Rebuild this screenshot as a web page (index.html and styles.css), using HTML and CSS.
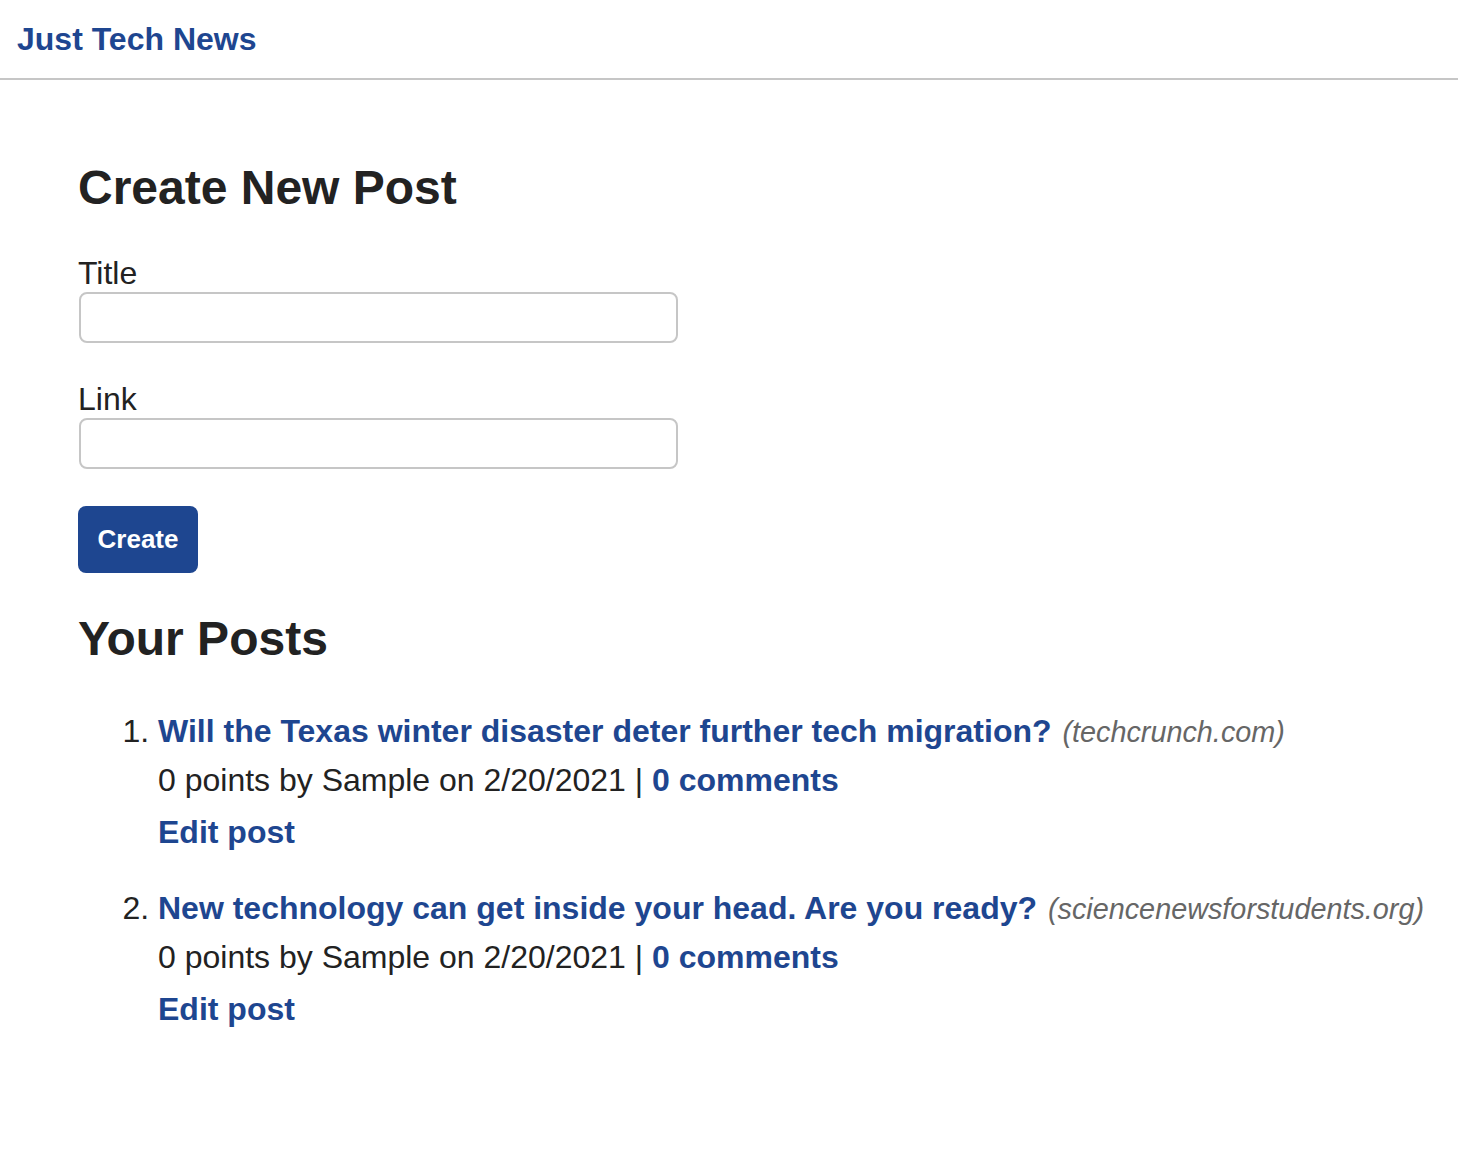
FILE: index.html
```html
<!DOCTYPE html>
<html lang="en">
<head>
<meta charset="utf-8">
<title>Just Tech News</title>
<link rel="stylesheet" href="styles.css">
</head>
<body>
<header class="site-header">
  <a class="brand" href="#">Just Tech News</a>
</header>
<main class="main">
  <h2 class="section-title">Create New Post</h2>
  <form class="post-form">
    <label class="field-label" for="title">Title</label>
    <input class="field-input" id="title" type="text">
    <label class="field-label field-label-gap" for="link">Link</label>
    <input class="field-input" id="link" type="text">
    <button class="btn" type="button">Create</button>
  </form>
  <h2 class="section-title posts-title">Your Posts</h2>
  <ol class="post-list">
    <li class="post">
      <div class="post-line"><a class="post-link" href="#">Will the Texas winter disaster deter further tech migration?</a> <span class="domain">(techcrunch.com)</span></div>
      <div class="post-line">0 points by Sample on 2/20/2021 | <a class="post-link" href="#">0 comments</a></div>
      <div class="post-line post-edit"><a class="post-link" href="#">Edit post</a></div>
    </li>
    <li class="post">
      <div class="post-line"><a class="post-link" href="#">New technology can get inside your head. Are you ready?</a> <span class="domain">(sciencenewsforstudents.org)</span></div>
      <div class="post-line">0 points by Sample on 2/20/2021 | <a class="post-link" href="#">0 comments</a></div>
      <div class="post-line post-edit"><a class="post-link" href="#">Edit post</a></div>
    </li>
  </ol>
</main>
</body>
</html>
```
FILE: styles.css
```css
html, body {
  margin: 0;
  padding: 0;
  background: #ffffff;
}
body {
  font-family: "Liberation Sans", Arial, Helvetica, sans-serif;
  font-size: 32px;
  color: #222222;
}
.site-header {
  padding: 16px 17px;
  border-bottom: 2px solid #c6c6c6;
  line-height: 46px;
  height: 46px;
}
.brand {
  color: #1e4690;
  font-weight: bold;
  font-size: 32px;
  text-decoration: none;
}
.main {
  padding: 80px 0 40px 78px;
}
.section-title {
  margin: 0;
  font-size: 48px;
  line-height: 56px;
  font-weight: bold;
  color: #222222;
}
.post-form {
  display: flex;
  flex-direction: column;
  align-items: flex-start;
  margin-top: 38px;
}
.field-label {
  line-height: 38px;
  display: block;
}
.field-label-gap {
  margin-top: 37px;
}
.field-input {
  box-sizing: border-box;
  width: 599px;
  height: 51px;
  border: 2px solid #c6c6c6;
  border-radius: 8px;
  margin: 0 0 0 1px;
  padding: 0 10px;
  font-size: 26px;
  font-family: inherit;
}
.btn {
  margin-top: 37px;
  width: 120px;
  height: 67px;
  background: #1e4690;
  color: #ffffff;
  border: none;
  border-radius: 8px;
  font-family: "Liberation Sans", Arial, sans-serif;
  font-weight: bold;
  font-size: 26px;
  padding: 0;
}
.posts-title {
  margin-top: 38px;
}
.post-list {
  margin: 40px 0 0 0;
  padding-left: 80px;
}
.post {
  margin-bottom: 28px;
}
.post-line {
  line-height: 48px;
}
.post-edit {
  margin-top: 4px;
}
.post-link {
  color: #1e4690;
  font-weight: bold;
  text-decoration: none;
}
.domain {
  font-style: italic;
  color: #666666;
  font-size: 28.8px;
  margin-left: 2px;
}
```
